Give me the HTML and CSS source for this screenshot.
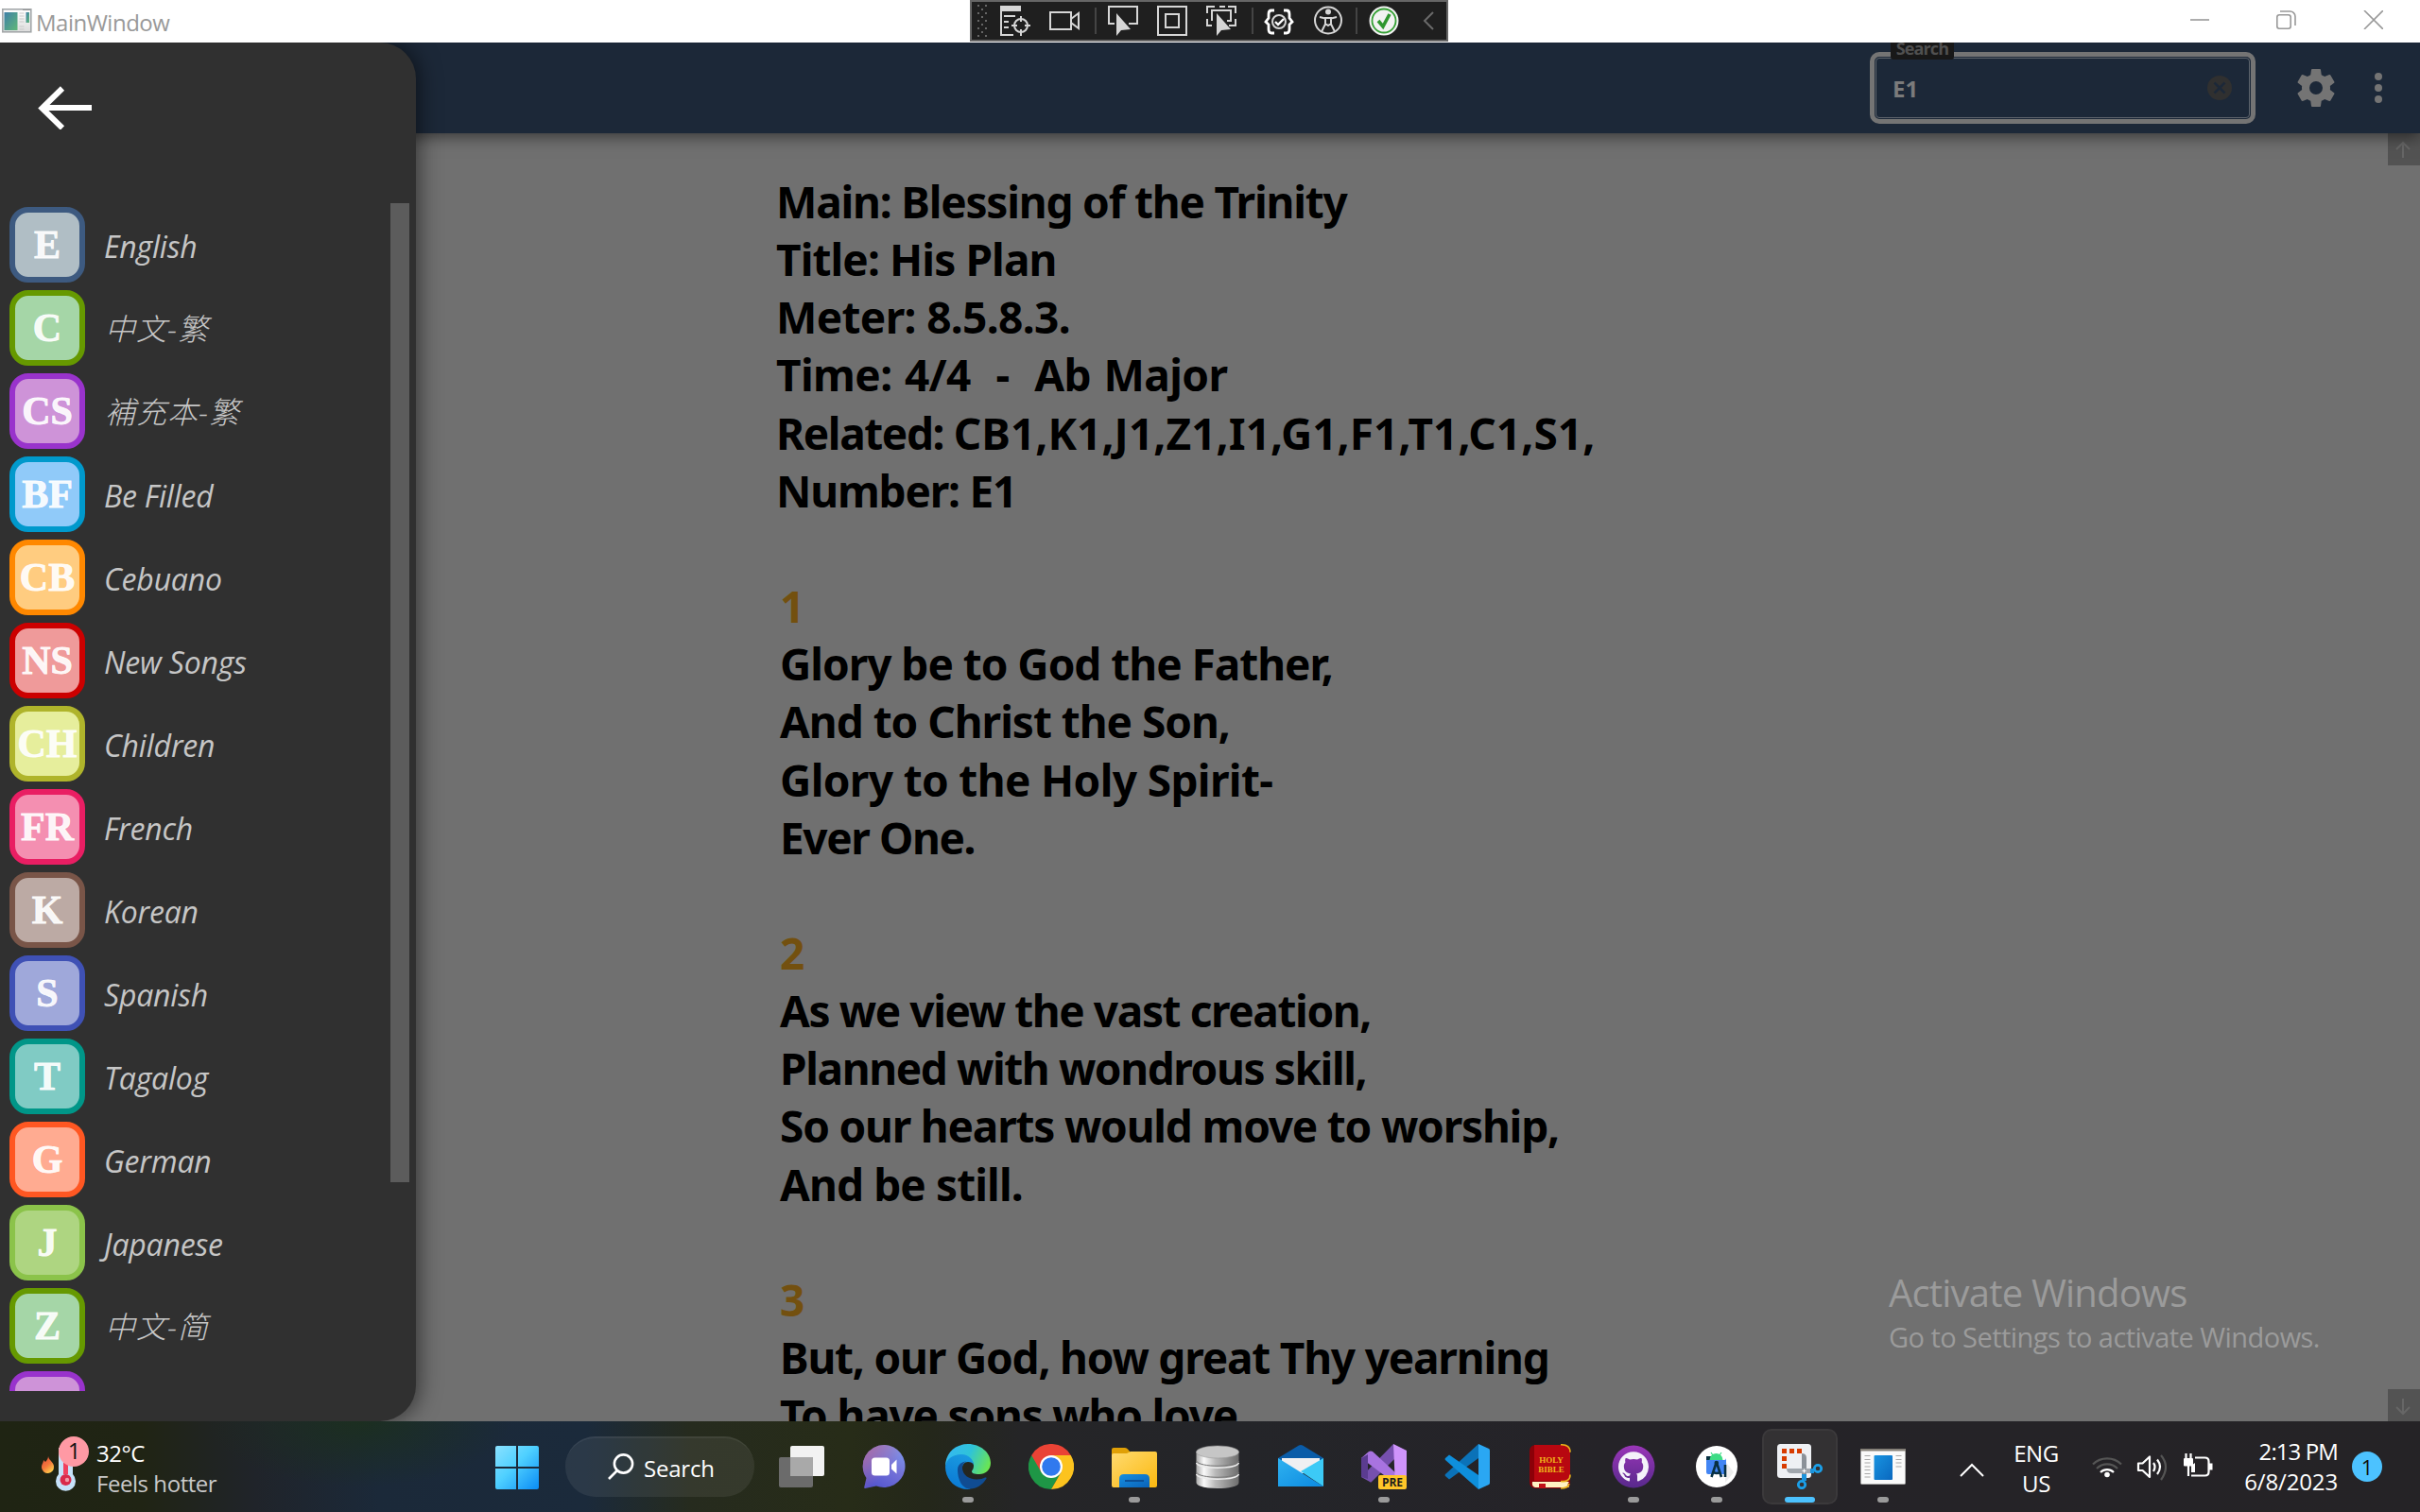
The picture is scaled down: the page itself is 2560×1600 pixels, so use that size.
FILE: index.html
```html
<!DOCTYPE html>
<html lang="en">
<head>
<meta charset="utf-8">
<title>MainWindow</title>
<link rel="stylesheet" href="styles.css">
</head>
<body>
<header class="titlebar">
  <svg class="app-icon" viewBox="0 0 32 26">
    <defs>
      <linearGradient id="scr" x1="0" y1="0" x2="1" y2="1"><stop offset="0" stop-color="#3f7fa8"/><stop offset="1" stop-color="#5fb878"/></linearGradient>
      <linearGradient id="frm" x1="0" y1="0" x2="0" y2="1"><stop offset="0" stop-color="#fff"/><stop offset="1" stop-color="#dcdcdc"/></linearGradient>
    </defs>
    <rect x=".8" y=".8" width="30" height="24" fill="url(#frm)" stroke="#a3a7a9" stroke-width="1.6"/>
    <rect x="2.500" y="4" width="14" height="19" fill="url(#scr)"/>
    <path d="M18.500 5h5M18.500 8h5M18.500 11h5M18.500 14h5M18.500 19h5M18.500 22h5" stroke="#c9c9c9" stroke-width="1"/>
    <rect x="25.500" y="4" width="3.500" height="11" fill="url(#scr)"/>
    <path d="M22 1.500h8" stroke="#999" stroke-width="1"/>
  </svg>
  <span class="window-title">MainWindow</span>
  <svg class="window-buttons" viewBox="0 0 204 20" fill="none" stroke="#999" stroke-width="1.600">
    <path d="M0 10h20"/>
    <rect x="91.800" y="4.800" width="14.400" height="14.400" rx="2.500"/>
    <path d="M95 1h10.500a5.500 5.500 0 0 1 5.500 5.500V16"/>
    <path d="M184 0l20 20M204 0l-20 20"/>
  </svg>

  <div class="debugbar">
    <svg viewBox="0 0 502 40" fill="none" stroke="#d6d6d6" stroke-width="2">
      <g fill="#666" stroke="none">
        <path d="M6 3h2v2h-2zM14 3h2v2h-2zM10 7h2v2h-2zM6 11h2v2h-2zM14 11h2v2h-2zM10 15h2v2h-2zM6 19h2v2h-2zM14 19h2v2h-2zM10 23h2v2h-2zM6 27h2v2h-2zM14 27h2v2h-2zM10 31h2v2h-2zM6 35h2v2h-2zM14 35h2v2h-2z"/>
      </g>
      <path d="M30 4h22v6H30z" fill="#d6d6d6" stroke="none"/>
      <path d="M31 10v25h13M34 15h12M34 21h5M34 27h5"/>
      <circle cx="52" cy="25" r="7"/><path d="M52 15v6M52 29v7M42 25h6M56 25h6"/>
      <path d="M83 11h22v18H83zM105 18l8-6v16l-8-6z"/>
      <path d="M131 6v28M297 6v28M407 6v28" stroke="#444"/>
      <path d="M151 23h-6V5h30v18h-9"/>
      <path d="M153 12v24l5-6 10-1z" fill="#d6d6d6" stroke="none"/>
      <path d="M197 5h30v30h-30zM205 13h14v14h-14z"/>
      <path d="M249 12V5h8M271 5h8v7M279 18v7h-7M249 18v7h5M254 20V9h20v11h-4M262 5h6"/>
      <path d="M259 12v24l5-6 10-1z" fill="#d6d6d6" stroke="none"/>
      <path d="M320 9h-3q-3 0-3 4v4l-3 4 3 3v5q0 4 3 4h3M330 9h3q3 0 3 4v4l3 4-3 3v5q0 4-3 4h-3" stroke="#fff" stroke-width="2.800"/>
      <circle cx="325" cy="21" r="7"/><path d="M321 21l3 3 6-6" stroke="#fff" stroke-width="2.400"/>
      <circle cx="377" cy="19.500" r="14"/><circle cx="377" cy="10.500" r="3" fill="#d6d6d6" stroke="none"/>
      <path d="M368 16l6 1.500v6l-4 8M386 16l-6 1.500v6l4 8M373 17h8M374 23l3 2 3-2"/>
      <circle cx="436" cy="20" r="15.500" fill="#f2f2f2" stroke="none"/>
      <circle cx="436" cy="20" r="12.500" stroke="#35a035" stroke-width="1.800"/>
      <path d="M430 20l5 6 7-13" stroke="#2f962f" stroke-width="3.600"/>
      <path d="M488 11l-9 9 9 9" stroke="#6a6a6a"/>
    </svg>
  </div>
</header>

<main class="window">
  <div class="appbar">
    <div class="search-field">
      <span class="search-label">Search</span>
      <span class="search-value">E1</span>
      <svg class="clear" viewBox="0 0 26 26"><circle cx="13" cy="13" r="13" fill="#303030"/><path d="M7.500 7.500l11 11M18.500 7.500l-11 11" stroke="#1c2838" stroke-width="2.600"/></svg>
    </div>
    <svg class="gear" viewBox="2 2 20 20"><path fill="#747474" d="M12 15.500A3.500 3.500 0 0 1 8.500 12 3.500 3.500 0 0 1 12 8.500a3.500 3.500 0 0 1 3.500 3.500 3.500 3.500 0 0 1-3.500 3.500m7.430-2.530c.04-.32.07-.64.07-.97s-.03-.66-.07-1l2.110-1.630c.19-.15.24-.42.12-.64l-2-3.460c-.12-.22-.39-.31-.61-.22l-2.490 1c-.52-.39-1.060-.73-1.690-.98l-.37-2.650A.506.506 0 0 0 14 2h-4c-.25 0-.46.18-.5.42l-.37 2.650c-.63.25-1.170.59-1.690.98l-2.490-1c-.22-.09-.49 0-.61.22l-2 3.460c-.13.22-.07.49.12.64L4.570 11c-.04.34-.07.67-.07 1s.03.65.07.97l-2.110 1.660c-.19.15-.25.42-.12.64l2 3.460c.12.22.39.300.61.220l2.490-1.010c.52.4 1.060.74 1.690.99l.37 2.650c.04.24.25.42.5.42h4c.25 0 .46-.18.5-.42l.37-2.650c.63-.26 1.170-.59 1.690-.99l2.490 1.010c.22.08.49 0 .61-.22l2-3.460c.12-.22.07-.49-.12-.64z"/></svg>
    <svg class="more" viewBox="0 0 8 32" fill="#747474"><circle cx="4" cy="4" r="4"/><circle cx="4" cy="16" r="4"/><circle cx="4" cy="28" r="4"/></svg>
  </div>

  <div class="page">
    <article class="hymn">
      <div class="meta">
        <p class="snug">Main: Blessing of the Trinity</p>
        <p class="normal">Title: His Plan</p>
        <p class="loose">Meter: 8.5.8.3.</p>
        <p class="spread">Time: 4/4&nbsp; -&nbsp; Ab Major</p>
        <p class="codes"><span class="tight">Related: </span>CB1,K1,J1,Z1,I1,G1,F1,T1,C1,S1,</p>
        <p class="snug">Number: E1</p>
      </div>
      <section class="verse">
        <h2>1</h2>
        <p>Glory be to God the Father,</p><p>And to Christ the Son,</p><p class="loose">Glory to the Holy Spirit-</p><p class="tight">Ever One.</p>
      </section>
      <section class="verse">
        <h2>2</h2>
        <p class="tight">As we view the vast creation,</p><p class="tight">Planned with wondrous skill,</p><p class="snug">So our hearts would move to worship,</p><p class="normal">And be still.</p>
      </section>
      <section class="verse">
        <h2>3</h2>
        <p class="snug">But, our God, how great Thy yearning</p><p class="snug">To have sons who love</p>
      </section>
    </article>
    <div class="page-scroll">
      <svg viewBox="0 0 34 34"><path d="M16 26V10M9 17l7-7 7 7"/></svg>
      <svg viewBox="0 0 34 34"><path d="M16 10v16M9 19l7 7 7-7"/></svg>
    </div>
  </div>

  <aside class="drawer">
    <svg class="back" viewBox="0 0 58 46"><path d="M57 23H5M26 2.500L4.500 23.500 26 44.500" fill="none" stroke="#fff" stroke-width="6"/></svg>
    <div class="list-area">
      <ul class="books">
        <li class="e"><b>E</b><i>English</i></li>
        <li class="c"><b>C</b><i class="han">中文-繁</i></li>
        <li class="cs"><b>CS</b><i class="han">補充本-繁</i></li>
        <li class="bf"><b>BF</b><i>Be Filled</i></li>
        <li class="cb"><b>CB</b><i>Cebuano</i></li>
        <li class="ns"><b>NS</b><i>New Songs</i></li>
        <li class="ch"><b>CH</b><i>Children</i></li>
        <li class="fr"><b>FR</b><i>French</i></li>
        <li class="k"><b>K</b><i>Korean</i></li>
        <li class="s"><b>S</b><i>Spanish</i></li>
        <li class="t"><b>T</b><i>Tagalog</i></li>
        <li class="g"><b>G</b><i>German</i></li>
        <li class="j"><b>J</b><i>Japanese</i></li>
        <li class="c"><b>Z</b><i class="han">中文-简</i></li>
        <li class="cs"><b></b></li>
      </ul>
      <div class="thumb"></div>
    </div>
  </aside>

  <div class="watermark">
    <p class="wm-title">Activate Windows</p>
    <p class="wm-text">Go to Settings to activate Windows.</p>
  </div>
</main>

<footer class="taskbar">
  <div class="weather">
    <svg viewBox="0 0 52 60">
      <defs><linearGradient id="fl" x1="0" y1="0" x2=".6" y2="1"><stop offset="0" stop-color="#e0453a"/><stop offset=".6" stop-color="#f4793c"/><stop offset="1" stop-color="#ffc94a"/></linearGradient></defs>
      <path d="M7 21c1 5 6 6 6 11a6.500 6.500 0 0 1-13 1c0-4 2-5 2-8l2 2c2-2 3-4 3-6z" fill="url(#fl)"/>
      <path d="M18 12h15v28a10.500 10.500 0 1 1-15 0z" fill="#c6e2fa"/>
      <path d="M23 12h5v28h-5z" fill="#f0405f"/><circle cx="25.500" cy="46" r="6" fill="#d92a4b"/><circle cx="27" cy="46" r="2.200" fill="#ef9aa8"/>
      <circle cx="34" cy="16" r="16" fill="#ff99a4"/>
      <text x="34.500" y="24" text-anchor="middle" class="badge-num">1</text>
    </svg>
    <div class="two-line"><span>32°C</span><span class="dim">Feels hotter</span></div>
  </div>

  <nav class="apps">
    <div class="start"><svg width="46" height="46" viewBox="0 0 46 46">
      <defs><linearGradient id="win" x1="0" y1="0" x2="1" y2="1"><stop offset="0" stop-color="#8ae1ff"/><stop offset=".45" stop-color="#4fd0ff"/><stop offset="1" stop-color="#0a8cf5"/></linearGradient></defs>
      <path fill="url(#win)" d="M2 0h20v22H0V2q0-2 2-2zM24 0h20q2 0 2 2v20H24zM0 24h22v22H2q-2 0-2-2zM24 24h22v20q0 2-2 2H24z"/></svg></div>
    <div class="search-pill">
      <svg width="28" height="28" viewBox="0 0 28 28" fill="none" stroke="#fff" stroke-width="2.600"><circle cx="16.500" cy="11" r="9.600"/><path d="M10 18l-9 9"/></svg>
      <span>Search</span>
    </div>

    <div class="task"><svg viewBox="0 0 48 48">
      <rect x="12" y="2" width="36" height="32" rx="2" fill="#f2f2f2"/><rect x="0" y="14" width="36" height="32" rx="2" fill="#6b6b6b"/><rect x="12" y="14" width="24" height="20" fill="#a9a9a9"/></svg></div>

    <div class="task"><svg viewBox="0 0 48 48">
      <defs><linearGradient id="chat" x1=".9" y1="0" x2=".3" y2="1"><stop offset="0" stop-color="#7d9bf0"/><stop offset=".5" stop-color="#7472d8"/><stop offset="1" stop-color="#5355cf"/></linearGradient><linearGradient id="chat2" x1="0" y1="0" x2=".6" y2=".6"><stop offset="0" stop-color="#b06ba0"/><stop offset="1" stop-color="#b06ba0" stop-opacity="0"/></linearGradient></defs>
      <path d="M24 1a22.500 22.500 0 1 1-9 43.500L3 47q-1 0-.7-1.500L4.500 36A22.500 22.500 0 0 1 24 1z" fill="url(#chat)"/><path d="M24 1a22.500 22.500 0 1 1-9 43.500L3 47q-1 0-.7-1.500L4.500 36A22.500 22.500 0 0 1 24 1z" fill="url(#chat2)"/>
      <rect x="10" y="14.500" width="19" height="19" rx="3.500" fill="#fff"/><path d="M31 22l5.500-5.500v15L31 26.500z" fill="#fff"/></svg></div>

    <div class="task running"><svg viewBox="0 0 48 48">
      <defs>
        <linearGradient id="eg" x1="0" y1=".3" x2="1" y2=".6"><stop offset="0" stop-color="#35b8f2"/><stop offset=".5" stop-color="#2fc3d8"/><stop offset="1" stop-color="#6be651"/></linearGradient>
        <linearGradient id="eb" x1=".6" y1="0" x2=".3" y2="1"><stop offset="0" stop-color="#1a9ae0"/><stop offset="1" stop-color="#0a78d4"/></linearGradient>
      </defs>
      <path d="M0 24C0 9 11 0 24 0s24 9 24 20c0 8-6 12-12 12s-8-1-8-3c0-1 2-2 2-6 0-6-6-10-13-10C8 13 2 18 0 24z" fill="url(#eg)"/>
      <path d="M0 24c1-8 8-13 17-13 8 0 13 6 13 11-1-2-3-3-6-3-5 0-7 5-6 9 1 8 8 12 13 14-2 4-5 6-7 6C11 48 0 38 0 24z" fill="url(#eb)"/>
      <path d="M13 27c0-5 4-8 9-8.500-3 1-4 4-4 7 0 7 7 12 15 12 4 0 7-1 9-2 1 0 2 0 1.500 1C40 43 33 47.500 26 47.500 18 47.500 13 38 13 27z" fill="#104c92"/></svg></div>

    <div class="task"><svg viewBox="0 0 48 48">
      <path d="M3.200 12A24 24 0 0 0 24 48l10.400-18L24 24z" fill="#1e9646"/><path d="M44.800 12A24 24 0 0 1 24 48l10.400-18L24 12z" fill="#fcc31e"/><path d="M24 12h20.800A24 24 0 0 0 3.200 12l10.400 18z" fill="#ea4335"/>
      <circle cx="24" cy="24" r="12" fill="#fff"/><circle cx="24" cy="24" r="9.800" fill="#3079ee"/></svg></div>

    <div class="task running"><svg viewBox="0 0 48 48">
      <defs><linearGradient id="fo" x1="0" y1="0" x2="1" y2="1"><stop offset="0" stop-color="#ffdb70"/><stop offset="1" stop-color="#fbb80f"/></linearGradient><linearGradient id="fb" x1="0" y1="0" x2="1" y2="1"><stop offset="0" stop-color="#168fe0"/><stop offset="1" stop-color="#0a62b8"/></linearGradient></defs>
      <path d="M0 6q0-2 2-2h12q2 0 3 1.500L20 9v6H0z" fill="#e0a006"/><path d="M0 12q0-2 2-2h14l4-2h26q2 0 2 2v34q0 2-2 2H2q-2 0-2-2z" fill="url(#fo)"/>
      <path d="M8 46V37q0-5 5-5h22q5 0 5 5v9z" fill="url(#fb)"/><path d="M14 39h20" stroke="#0b4f96" stroke-width="2"/></svg></div>

    <div class="task"><svg viewBox="0 0 48 48">
      <defs><linearGradient id="db" x1="0" y1="0" x2="1" y2="0"><stop offset="0" stop-color="#aaa"/><stop offset=".18" stop-color="#fafafa"/><stop offset=".45" stop-color="#b9b9b9"/><stop offset="1" stop-color="#6d6d6d"/></linearGradient></defs>
      <path d="M1.500 8v33c0 8 45 8 45 0V8z" fill="url(#db)"/><ellipse cx="24" cy="8.500" rx="22.500" ry="6.500" fill="#c6c6c6" stroke="#999" stroke-width=".6"/>
      <path d="M1.500 18c3 7 42 7 45 0M1.500 30c3 7 42 7 45 0" fill="none" stroke="#777" stroke-width="1"/><path d="M1.500 20c3 7 42 7 45 0M1.500 32c3 7 42 7 45 0" fill="none" stroke="#ececec" stroke-width="1.500"/></svg></div>

    <div class="task"><svg viewBox="0 0 48 48">
      <defs><linearGradient id="ml" x1="0" y1="0" x2="1" y2="1"><stop offset="0" stop-color="#2fb2f0"/><stop offset="1" stop-color="#0c8ae0"/></linearGradient></defs>
      <path d="M0 15L22 1.500q2-1 4 0L48 15v6H0z" fill="#0a5ca8"/><path d="M4 15h40v16H4z" fill="#f0f0f2"/><path d="M48 15v30L24 29z" fill="#3ccaf6"/><path d="M0 15l48 30H0z" fill="url(#ml)"/></svg></div>

    <div class="task running"><svg viewBox="0 0 48 48">
      <path d="M0 35L34 0l3 14L11 40q-1 1-2 0z" fill="#7650ae"/><path d="M0 15l8-7q2-1 4 0l26 24-2 10z" fill="#a873e0"/><path d="M34 0l14 7v33l-12 6z" fill="#cf94fb"/><path d="M0 15l7-4v26l-7-2z" fill="#5b3c90"/>
      <rect x="18" y="33" width="30" height="15" rx="2" fill="#ffc629"/><text x="33" y="44.800" text-anchor="middle" class="pre">PRE</text></svg></div>

    <div class="task"><svg viewBox="0 0 48 48">
      <path d="M36 0v15L5 37.500 1 34q-1-1 0-2z" fill="#0b72b8"/><path d="M36 48V33L5 11.500 1 15q-1 1 0 2z" fill="#0e8fdc"/><path d="M36 0l11 5q1 .5 1 2v34q0 1.500-1 2l-11 5z" fill="#2aa7f3"/></svg></div>

    <div class="task"><svg viewBox="0 0 48 48">
      <path d="M2 8q0-7 7-7h30q6 0 6 7v33q0 6-6 6H9q-7 0-7-7z" fill="#8c0008"/><path d="M7 1h32q6 0 6 7v27q0 4-4 4H7z" fill="#b80710"/>
      <path d="M5 40h39q-3 3 0 6H8q-4-1-3-6z" fill="#fff2c4"/><path d="M12 42h7v5h-7z" fill="#c01018"/><path d="M35 .8q10-.3 10 8M35 39.500q10 1 10-7M35 47q8 0 9-5" fill="none" stroke="#e8b21a" stroke-width="1.600"/>
      <text x="25" y="20" text-anchor="middle" class="bible">HOLY</text><text x="25" y="29.500" text-anchor="middle" class="bible">BIBLE</text></svg></div>

    <div class="task running"><svg viewBox="0 0 48 48">
      <defs><linearGradient id="gh" x1="0" y1="0" x2="0" y2="1"><stop offset="0" stop-color="#9a36b8"/><stop offset="1" stop-color="#58298c"/></linearGradient></defs>
      <circle cx="24" cy="24" r="22.500" fill="url(#gh)"/>
      <path transform="translate(8 8.300) scale(2)" fill="#f4f2fa" d="M8 0C3.580 0 0 3.580 0 8c0 3.540 2.290 6.530 5.470 7.590.4.070.55-.17.55-.38 0-.19-.01-.82-.01-1.490-2.010.37-2.530-.49-2.690-.94-.09-.23-.48-.94-.82-1.130-.28-.15-.68-.52-.01-.53.63-.01 1.080.58 1.230.82.72 1.210 1.870.87 2.330.66.07-.52.28-.87.51-1.070-1.780-.2-3.640-.89-3.640-3.950 0-.87.31-1.590.82-2.150-.08-.2-.36-1.020.08-2.120 0 0 .67-.21 2.200.82.64-.18 1.320-.27 2-.27s1.360.09 2 .27c1.530-1.040 2.200-.82 2.200-.82.44 1.100.16 1.920.08 2.120.51.56.82 1.270.82 2.150 0 3.070-1.870 3.750-3.650 3.950.29.25.54.73.54 1.480 0 1.070-.01 1.930-.01 2.200 0 .21.15.46.55.38A8.010 8.010 0 0 0 16 8c0-4.420-3.580-8-8-8z"/></svg></div>

    <div class="task running"><svg viewBox="0 0 48 48">
      <circle cx="24" cy="24" r="22" fill="#fff"/><path d="M33 18l9 12-9 11z" fill="#eee"/>
      <path d="M13 13h5v5h-5z" fill="#083042"/><path d="M13 17h19q2 0 2-2v17H15q-2 0-2-2z" fill="#4285f4"/>
      <path d="M16.500 17a7 7 0 0 1 14 0z" fill="#3ddc84"/><path d="M18 9l2 3M29 9l-2 3" stroke="#3ddc84" stroke-width="1.200"/>
      <path d="M23.500 20l-5 15M24 20l5 15M21 30q3 2 6 0M33 22v13" fill="none" stroke="#083042" stroke-width="2.600"/><circle cx="23.800" cy="20" r="2.300" fill="#083042"/></svg></div>

    <div class="task active"><svg viewBox="0 0 48 48">
      <rect x="0" y="0" width="36" height="36" rx="3.500" fill="#eef0f4"/>
      <path d="M5 5h5v5H5zM13 5h5v5h-5zM21 5h5v5h-5zM5 13h5v5H5zM5 21h5v5H5z" fill="#d83b01"/>
      <path d="M26 10q5 0 5 5v17h-5z" fill="#8b9199"/><path d="M10 26h26v5H15q-5 0-5-5z" fill="#a0a6ad"/><path d="M28.500 26.500v4M26.500 28.500h4" stroke="#fff" stroke-width="1"/>
      <path d="M28.500 32v7M35 28.500h4" stroke="#1b93dc" stroke-width="5"/><circle cx="26" cy="43" r="3.700" fill="none" stroke="#1b9fe8" stroke-width="2.800"/><circle cx="43" cy="26" r="3.700" fill="none" stroke="#1b9fe8" stroke-width="2.800"/></svg></div>

    <div class="task running"><svg viewBox="0 0 48 48">
      <defs><linearGradient id="mw" x1="0" y1="0" x2="1" y2="1"><stop offset="0" stop-color="#1893e0"/><stop offset="1" stop-color="#0a68bf"/></linearGradient></defs>
      <rect x=".5" y="5.500" width="47" height="37" rx="1" fill="#fafafa" stroke="#aaa"/><path d="M0 5h48v2.500H0z" fill="#858078"/><rect x="14.500" y="12" width="19.500" height="26" rx="1" fill="url(#mw)"/>
      <path d="M4.500 12.500h6M4.500 16.500h6M4.500 20h6M4.500 24h6M4.500 27.500h6M4.500 31.500h6M4.500 35h6M37.500 12.500h6M37.500 16.500h6M37.500 20h6M37.500 24h6" stroke="#a8a8a8" stroke-width="1.200"/></svg></div>
  </nav>

  <div class="tray">
    <svg class="chev" viewBox="0 0 26 15"><path d="M1 14L13 2l12 12" fill="none" stroke="#fff" stroke-width="2"/></svg>
    <div class="two-line lang"><span>ENG</span><span>US</span></div>
    <svg class="status" viewBox="0 0 130 32" fill="none" stroke="#fff" stroke-width="2.200">
      <path d="M1 13.500a21.500 21.500 0 0 1 30 0M5 18a15.500 15.500 0 0 1 22 0" stroke="#555"/>
      <path d="M9 22a10 10 0 0 1 14 0"/><circle cx="16" cy="24.500" r="2.800" fill="#fff" stroke="none"/>
      <path d="M49 12.500h4.500l7.500-7v21.500l-7.500-7H49q0 0 0-1z" stroke-linejoin="round"/><path d="M65 12q3 4 0 9M69 8.500q6 7.500 0 15.500"/><path d="M73 4q10 12 0 26" stroke="#555"/>
      <path d="M97 8v6.500q0 1 1 1h8q1 0 1-1V8q0-1-1-1h-8q-1 0-1 1z" fill="#fff" stroke="none"/><path d="M99.500 2v7M104.500 2v7M102 14v12M109 6.500h10.500q4 0 4 4v11q0 4-4 4H105"/><path d="M105 15l4-3v10h-4z" fill="#fff" stroke="none"/><path d="M124 12.500h3.500v7H124z" fill="#fff" stroke="none"/>
    </svg>
    <div class="two-line clock"><span>2:13 PM</span><span class="date">6/8/2023</span></div>
    <span class="count">1</span>
  </div>
</footer>
</body>
</html>
```
FILE: styles.css
```css
* { box-sizing: border-box; }
body {
  margin: 0;
  width: 2560px;
  height: 1600px;
  overflow: hidden;
  display: grid;
  grid-template-rows: 45px 1459px 96px;
  font-family: "Open Sans", "Noto Sans", sans-serif;
}
p, h2, ul { margin: 0; padding: 0; }
svg { display: block; flex: none; }

/* Title bar */
.titlebar {
  position: relative;
  display: flex;
  align-items: center;
  background: #fff;
  padding: 0 39px 0 2px;
}
.app-icon { width: 32px; height: 26px; margin-top: -2px; }
.window-title { margin-left: 4px; color: #999; font-size: 24px; letter-spacing: -.5px; line-height: 45px; padding-top: 1px; }
.window-buttons { margin-left: auto; width: 204px; height: 20px; margin-top: -3px; }
.debugbar {
  position: absolute;
  left: 1026px;
  top: 0;
  width: 506px;
  height: 44px;
  border: 2px solid #666;
  background: #1f1f1f;
}

/* Window */
.window {
  position: relative;
  display: grid;
  grid-template-rows: 96px 1fr;
  overflow: hidden;
  min-height: 0;
}
.appbar {
  display: flex;
  align-items: center;
  justify-content: flex-end;
  background: #1c2838;
  padding-right: 40px;
  box-shadow: 0 3px 16px rgba(0, 0, 0, .55);
  z-index: 1;
}
.search-field {
  position: relative;
  display: flex;
  align-items: center;
  width: 408px;
  height: 76px;
  border: 5px solid #747474;
  border-radius: 10px;
  outline: 1px solid #5d646c;
  outline-offset: -7px;
  padding: 0 20px 0 19px;
}
.search-label {
  position: absolute;
  left: 17px;
  top: -23px;
  width: 67px;
  height: 26px;
  border-radius: 3px;
  background: #181818;
  color: #505050;
  font-size: 18px;
  font-weight: 700;
  letter-spacing: -.9px;
  line-height: 28px;
  text-align: center;
}
.search-value { color: #7b7b7b; font-size: 24px; font-weight: 700; }
.clear { width: 26px; height: 26px; margin-left: auto; }
.gear { width: 40px; height: 40px; margin-left: 44px; }
.more { width: 8px; height: 32px; margin-left: 42px; }

.page {
  display: flex;
  justify-content: space-between;
  background: #707070;
  min-height: 0;
  overflow: hidden;
}
.hymn {
  padding: 42px 0 0 821px;
  font-family: "Noto Sans", sans-serif;
  font-size: 46px;
  font-weight: 700;
  line-height: 61.15px;
  letter-spacing: -1.03px;
  color: #000;
  white-space: nowrap;
}
.tight { letter-spacing: -1.4px; }
.snug { letter-spacing: -1.2px; }
.normal { letter-spacing: -.9px; }
.loose { letter-spacing: -.65px; }
.spread { letter-spacing: -.6px; word-spacing: 2px; }
.codes { letter-spacing: .06px; }
.verse { padding: 61.15px 0 0 4px; }
.verse h2 { font: inherit; color: #73500f; }
.page-scroll { display: flex; flex-direction: column; justify-content: space-between; }
.page-scroll svg { width: 34px; height: 34px; background: #535353; fill: none; stroke: #666; stroke-width: 2; }

.watermark {
  position: absolute;
  left: 1998px;
  top: 1296px;
  color: #9b9b9b;
  white-space: nowrap;
}
.wm-title { font-size: 40px; line-height: 54px; letter-spacing: -.8px; }
.wm-text { font-size: 29px; line-height: 39px; letter-spacing: -.55px; }

/* Navigation drawer */
.drawer {
  position: absolute;
  left: 0;
  top: 0;
  z-index: 2;
  width: 440px;
  height: 1459px;
  padding: 46px 7px 0 10px;
  background: #303030;
  border-radius: 0 38px 38px 0;
  box-shadow: 4px 0 22px rgba(0, 0, 0, .5);
}
.back { width: 58px; height: 46px; margin-left: 30px; }
.list-area {
  display: flex;
  justify-content: space-between;
  margin-top: 78px;
  height: 1257px;
  overflow: hidden;
}
.books { list-style: none; display: flex; flex-direction: column; gap: 8px; padding-top: 4px; }
.books li { display: flex; align-items: center; height: 80px; flex: none; }
.books b {
  display: flex;
  align-items: center;
  justify-content: center;
  width: 80px;
  height: 80px;
  border: 6px solid;
  border-radius: 20px;
  font: 700 42px/68px "Liberation Serif", serif;
  color: rgba(255, 255, 255, .92);
  -webkit-text-stroke: .9px rgba(255, 255, 255, .92);
  white-space: nowrap;
}
.books i { margin-left: 20px; padding-top: 3px; color: #c6c6c6; font-size: 32px; line-height: 77px; letter-spacing: -.2px; }
.books .han { margin-left: 21px; padding-top: 1px; font-family: "Open Sans", "Noto Sans CJK TC", sans-serif; font-weight: 300; letter-spacing: 1px; }
.thumb { width: 20px; height: 1036px; background: #5c5c5c; }
.books .e b { background: #b0bec5; border-color: #3d5a80; }
.books .c b { background: #a5d6a7; border-color: #669900; }
.books .cs b { background: #ce93d8; border-color: #9933cc; }
.books .bf b { background: #90caf9; border-color: #0099cc; }
.books .cb b { background: #ffcc80; border-color: #ff8800; }
.books .ns b { background: #ef9a9a; border-color: #cc0000; }
.books .ch b { background: #e6ee9c; border-color: #afb42b; }
.books .fr b { background: #f48fb1; border-color: #e91e63; }
.books .k b { background: #bcaaa4; border-color: #795548; }
.books .s b { background: #9fa8da; border-color: #3f51b5; }
.books .t b { background: #80cbc4; border-color: #009688; }
.books .g b { background: #ffab91; border-color: #ff5722; }
.books .j b { background: #aed581; border-color: #8bc34a; }

/* Taskbar */
.taskbar {
  display: flex;
  align-items: center;
  color: #fff;
  font-size: 24px;
  background:
    radial-gradient(ellipse 160px 70px at 380px 0, rgba(28, 48, 26, .8), rgba(28, 48, 26, 0)),
    linear-gradient(90deg, #1f2413 0, #202414 150px, #20242a 270px, #1b2939 400px, #1b2a3b 620px, #262b1e 730px, #272c18 900px, #24271a 980px, #252527 1080px, #242529 1300px, #252328 1700px, #252326 2560px);
}
.weather { display: flex; align-items: center; width: 524px; padding-left: 44px; }
.weather svg { width: 52px; height: 60px; margin-top: -4px; overflow: visible; }
.badge-num { font: 24px "Open Sans", sans-serif; fill: #111; }
.two-line { display: flex; flex-direction: column; line-height: 32px; letter-spacing: -.45px; white-space: nowrap; }
.weather .two-line { margin-left: 6px; padding-top: 3px; }
.dim { color: #c9c9c9; }
.apps { display: flex; align-items: center; }
.start { width: 74px; padding-top: 2px; }
.search-pill {
  display: flex;
  align-items: center;
  width: 200px;
  height: 64px;
  padding-left: 45px;
  gap: 10px;
  border-radius: 32px;
  border-top: 2px solid rgba(255, 255, 255, .06);
  background: rgba(255, 255, 255, .07);
  margin-right: 6px;
}
.search-pill span { padding-top: 1px; letter-spacing: -.2px; }
.search-pill svg { margin-top: -2px; }
.task {
  position: relative;
  display: flex;
  align-items: center;
  justify-content: center;
  width: 80px;
  height: 80px;
  margin: 0 4px;
  border-radius: 10px;
}
.task svg { width: 48px; height: 48px; }
.task.running::after, .task.active::after {
  content: "";
  position: absolute;
  left: 34px;
  bottom: 2px;
  width: 12px;
  height: 6px;
  border-radius: 3px;
  background: #9a9a9a;
}
.task.active { background: #333133; border: 2px solid #3b393b; }
.task.active::after { left: 22px; bottom: 0; width: 32px; background: #4cc2ff; }
.pre { font: 700 12px "Open Sans", sans-serif; fill: #1c1c1c; }
.bible { font: 700 9px "Liberation Serif", serif; fill: #f0b51c; }

.tray { display: flex; align-items: center; margin-left: auto; padding-right: 40px; }
.chev { width: 26px; height: 15px; margin-top: 6px; }
.lang { width: 50px; margin-left: 30px; padding-top: 3px; align-items: center; }
.status { width: 130px; height: 32px; margin-left: 34px; }
.clock { width: 104px; margin-left: 26px; align-items: flex-end; }
.clock span:first-child { letter-spacing: -.9px; }
.clock .date { letter-spacing: -.15px; }
.count {
  width: 32px;
  height: 32px;
  margin-left: 15px;
  border-radius: 50%;
  background: #4cc2ff;
  color: #111;
  font-size: 22px;
  line-height: 32px;
  text-align: center;
}
```
